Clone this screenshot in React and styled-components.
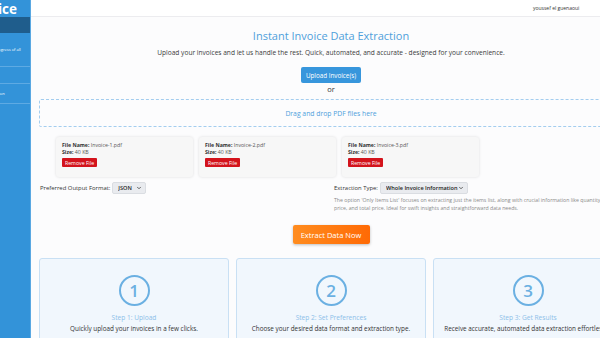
import React, { useState } from "react";
import styled, { createGlobalStyle } from "styled-components";
import { ChevronDown } from "lucide-react";

const GlobalStyle = createGlobalStyle`
  html, body {
    margin: 0;
    padding: 0;
    width: 600px;
    height: 338px;
    overflow: hidden;
    background: #fcfcfd;
    font-family: "Open Sans", "Liberation Sans", sans-serif;
  }
`;

const Page = styled.div`
  display: flex;
  align-items: flex-start;
  width: 640px;
`;

const Sidebar = styled.aside`
  width: 31px;
  height: 338px;
  flex-shrink: 0;
  overflow: hidden;
  background: #3393d9;
  border-right: 1px solid #5aa8e2;
  box-sizing: border-box;
`;

const SideInner = styled.div`
  width: 61px;
  margin-left: -30px;
  color: #fff;
`;

const Brand = styled.div`
  height: 17px;
  display: flex;
  align-items: center;
  justify-content: flex-end;
  padding-right: 14px;
  font-size: 13.5px;
  font-weight: 700;
  white-space: nowrap;
`;

const SideItem = styled.div`
  height: ${(p) => p.$h}px;
  display: flex;
  align-items: center;
  padding-left: 6px;
  box-sizing: border-box;
  font-size: 4px;
  line-height: 6px;
  white-space: nowrap;
  background: ${(p) => (p.$active ? "#1f5d8c" : "transparent")};
  border-bottom: ${(p) => (p.$active ? "none" : "1px solid #5eaae3")};
`;

const Main = styled.main`
  width: 600px;
  flex-shrink: 0;
  display: flex;
  flex-direction: column;
`;

const TopBar = styled.header`
  height: 17px;
  flex-shrink: 0;
  background: #fff;
  border-bottom: 1px solid #ececef;
  box-sizing: border-box;
  display: flex;
  align-items: center;
  padding-left: 502px;
  font-size: 5px;
  color: #333;
  white-space: nowrap;
`;

const Content = styled.section`
  padding: 0 8px;
  display: flex;
  flex-direction: column;
  align-items: center;
`;

const Title = styled.h1`
  margin: 11px 0 0;
  font-size: 11px;
  font-weight: 400;
  line-height: 16px;
  color: #4fa0db;
`;

const Subtitle = styled.p`
  margin: 4px 0 0;
  font-size: 6.6px;
  line-height: 10px;
  color: #3b3b3b;
`;

const UploadButton = styled.button`
  margin-top: 9px;
  width: 60px;
  height: 16px;
  padding: 0;
  border: 0;
  border-radius: 2px;
  background: #3796dc;
  color: #fff;
  font-family: inherit;
  font-size: 6.3px;
`;

const Or = styled.span`
  font-size: 7.5px;
  line-height: 9px;
  margin-top: 2px;
  color: #333;
`;

const DropZone = styled.div`
  align-self: stretch;
  margin-top: 5px;
  height: 26px;
  border: 1.5px dashed #a3cdef;
  border-radius: 2px;
  display: flex;
  align-items: center;
  justify-content: center;
  font-size: 6.8px;
  color: #4f9fdc;
`;

const FileList = styled.div`
  align-self: stretch;
  display: flex;
  gap: 6px;
  margin-top: 10px;
  padding-left: 17px;
`;

const FileCard = styled.div`
  width: 137px;
  height: 40px;
  box-sizing: border-box;
  padding: 5px 6px;
  background: #f7f7f7;
  border-radius: 3px;
  box-shadow: 0 0 3px rgba(0, 0, 0, 0.13);
  font-size: 5.2px;
  line-height: 7px;
  color: #555;
  b {
    color: #333;
  }
`;

const RemoveButton = styled.button`
  display: block;
  margin-top: 2px;
  height: 9px;
  padding: 0 3px;
  border: 0;
  border-radius: 1px;
  background: #d3131c;
  color: #fff;
  font-family: inherit;
  font-size: 5.2px;
`;

const Options = styled.div`
  align-self: stretch;
  display: grid;
  grid-template-columns: 295px 1fr;
  align-items: start;
  margin-top: 5px;
`;

const Field = styled.div`
  display: flex;
  align-items: center;
  gap: 2px;
  font-size: 5.9px;
  color: #333;
  padding-left: ${(p) => p.$pad || 0}px;
`;

const SelectWrap = styled.div`
  position: relative;
  width: ${(p) => p.$w}px;
  height: 12px;
  svg {
    position: absolute;
    right: 4px;
    top: 3px;
    pointer-events: none;
    color: #333;
  }
`;

const Select = styled.select`
  appearance: none;
  width: 100%;
  height: 100%;
  padding: 0 8px 0 5px;
  border: 1px solid #dadde2;
  border-radius: 2px;
  background: #e9ebef;
  font-family: inherit;
  font-size: 5.6px;
  font-weight: 600;
  color: #222;
  outline: none;
`;

const Hint = styled.p`
  margin: 2px 0 0;
  font-size: 5.2px;
  line-height: 8px;
  color: #8a8a8a;
  width: 272px;
`;

const ExtractButton = styled.button`
  margin-top: 13px;
  width: 77px;
  height: 19px;
  padding: 0;
  border: 0;
  border-radius: 2px;
  background: linear-gradient(90deg, #ff8c1f, #ff6a05);
  box-shadow: 0 1px 3px rgba(0, 0, 0, 0.25);
  color: #fff;
  font-family: inherit;
  font-size: 7.5px;
`;

const Steps = styled.div`
  align-self: stretch;
  display: grid;
  grid-template-columns: repeat(3, 1fr);
  gap: 7px;
  margin-top: 14px;
`;

const StepCard = styled.div`
  height: 100px;
  background: #f1f7fd;
  border: 1px solid #c9e0f4;
  border-radius: 3px;
  display: flex;
  flex-direction: column;
  align-items: center;
  padding-top: 16px;
  box-sizing: border-box;
`;

const StepCircle = styled.div`
  width: 27px;
  height: 27px;
  border: 2px solid #6bb0e2;
  border-radius: 50%;
  display: flex;
  align-items: center;
  justify-content: center;
  font-size: 17px;
  font-weight: 600;
  color: #6bb0e2;
`;

const StepTitle = styled.div`
  margin-top: 7px;
  font-size: 6.6px;
  color: #8dc0e9;
`;

const StepText = styled.div`
  margin-top: 2px;
  font-size: 6.35px;
  color: #333;
  white-space: nowrap;
`;

const steps = [
  { n: 1, title: "Step 1: Upload", text: "Quickly upload your invoices in a few clicks." },
  { n: 2, title: "Step 2: Set Preferences", text: "Choose your desired data format and extraction type." },
  { n: 3, title: "Step 3: Get Results", text: "Receive accurate, automated data extraction effortlessly." },
];

export default function App() {
  const [files, setFiles] = useState(["Invoice-1.pdf", "Invoice-2.pdf", "Invoice-3.pdf"]);

  return (
    <Page>
      <GlobalStyle />
      <Sidebar>
        <SideInner>
          <Brand>Invoice</Brand>
          <SideItem $h={16} $active>Home</SideItem>
          <SideItem $h={34}>Track the progress of all</SideItem>
          <SideItem $h={17}>Upload</SideItem>
          <SideItem $h={20}>Data Extraction</SideItem>
        </SideInner>
      </Sidebar>
      <Main>
        <TopBar>youssef el guenaoui</TopBar>
        <Content>
          <Title>Instant Invoice Data Extraction</Title>
          <Subtitle>
            Upload your invoices and let us handle the rest. Quick, automated, and accurate - designed for your convenience.
          </Subtitle>
          <UploadButton>Upload Invoice(s)</UploadButton>
          <Or>or</Or>
          <DropZone>Drag and drop PDF files here</DropZone>
          <FileList>
            {files.map((f) => (
              <FileCard key={f}>
                <div>
                  <b>File Name:</b> {f}
                </div>
                <div>
                  <b>Size:</b> 40 KB
                </div>
                <RemoveButton onClick={() => setFiles(files.filter((x) => x !== f))}>Remove File</RemoveButton>
              </FileCard>
            ))}
          </FileList>
          <Options>
            <Field $pad={1}>
              Preferred Output Format:
              <SelectWrap $w={34}>
                <Select defaultValue="json">
                  <option value="json">JSON</option>
                  <option value="csv">CSV</option>
                </Select>
                <ChevronDown size={6} strokeWidth={3} />
              </SelectWrap>
            </Field>
            <div>
              <Field>
                Extraction Type:
                <SelectWrap $w={88}>
                  <Select defaultValue="whole">
                    <option value="whole">Whole Invoice Information</option>
                    <option value="items">Only Items List</option>
                  </Select>
                  <ChevronDown size={6} strokeWidth={3} />
                </SelectWrap>
              </Field>
              <Hint>
                The option 'Only Items List' focuses on extracting just the items list, along with crucial information like quantity, price, and total price. Ideal for swift insights and straightforward data needs.
              </Hint>
            </div>
          </Options>
          <ExtractButton>Extract Data Now</ExtractButton>
          <Steps>
            {steps.map((s) => (
              <StepCard key={s.n}>
                <StepCircle>{s.n}</StepCircle>
                <StepTitle>{s.title}</StepTitle>
                <StepText>{s.text}</StepText>
              </StepCard>
            ))}
          </Steps>
        </Content>
      </Main>
    </Page>
  );
}
